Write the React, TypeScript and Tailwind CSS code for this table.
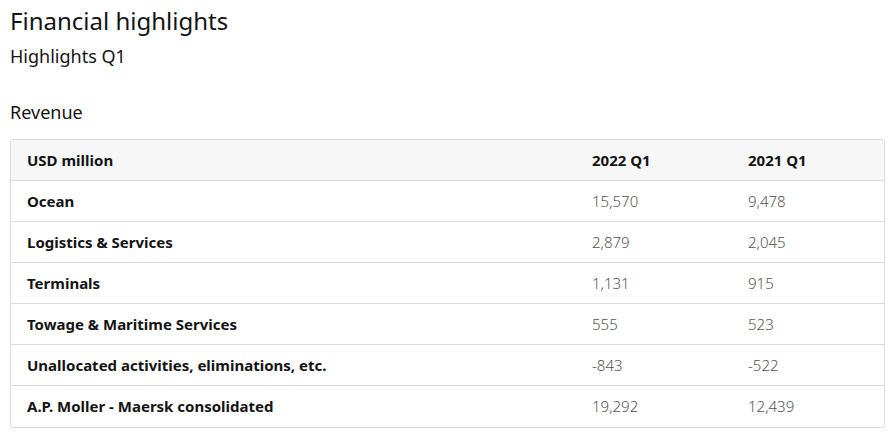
import React from 'react';

const rows: [string, string, string][] = [
  ['Ocean', '15,570', '9,478'],
  ['Logistics & Services', '2,879', '2,045'],
  ['Terminals', '1,131', '915'],
  ['Towage & Maritime Services', '555', '523'],
  ['Unallocated activities, eliminations, etc.', '-843', '-522'],
  ['A.P. Moller - Maersk consolidated', '19,292', '12,439'],
];

export default function App() {
  return (
    <div className="min-h-screen bg-white text-[#141414] pl-[10px] pr-[8px] pt-[5px]" style={{ fontFamily: '"Noto Sans", sans-serif' }}>
      <h1 className="text-[24px] leading-[32px] font-normal">Financial highlights</h1>
      <h2 className="text-[18px] leading-[28px] font-normal mt-[5px]">Highlights Q1</h2>
      <h3 className="text-[18px] leading-[28px] font-normal mt-[28px]">Revenue</h3>
      <div className="mt-[13px] border border-[#dbdbdb] rounded-[3px] overflow-hidden">
        <div className="grid grid-cols-[565px_156px_1fr] h-[41px] items-center bg-[#f7f7f7] border-b border-[#dbdbdb] text-[15px] font-bold">
          <div className="pl-[16px]">USD million</div>
          <div className="pl-[16px]">2022 Q1</div>
          <div className="pl-[16px]">2021 Q1</div>
        </div>
        {rows.map((r, i) => (
          <div
            key={i}
            className={`grid grid-cols-[565px_156px_1fr] h-[41px] items-center text-[15px] ${i < rows.length - 1 ? 'border-b border-[#dbdbdb]' : ''}`}
          >
            <div className="pl-[16px] font-bold">{r[0]}</div>
            <div className="pl-[16px] font-light text-[#545454]">{r[1]}</div>
            <div className="pl-[16px] font-light text-[#545454]">{r[2]}</div>
          </div>
        ))}
      </div>
    </div>
  );
}
